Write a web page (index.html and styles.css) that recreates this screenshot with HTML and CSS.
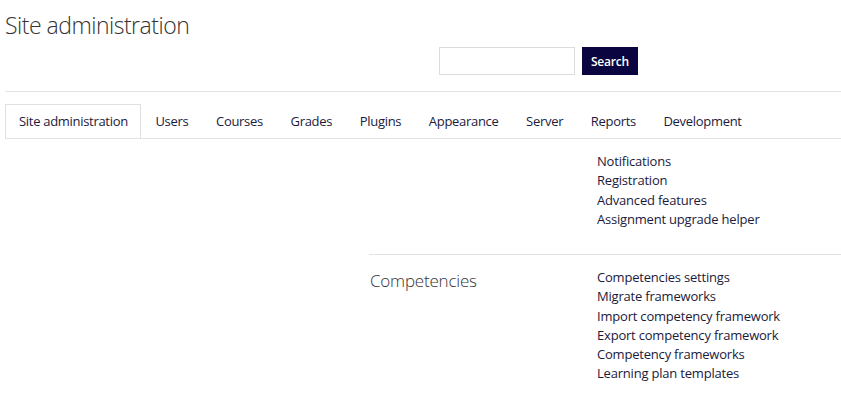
FILE: index.html
```html
<!DOCTYPE html>
<html lang="en">
<head>
<meta charset="utf-8">
<title>Site administration</title>
<link rel="stylesheet" href="styles.css">
</head>
<body>
<div class="page">
  <header class="page-header">
    <h1 class="page-title">Site administration</h1>
    <form class="search-form">
      <input class="search-input" type="text" aria-label="Search">
      <button class="search-btn" type="button">Search</button>
    </form>
  </header>
  <nav class="tabs">
    <a class="tab active">Site administration</a>
    <a class="tab">Users</a>
    <a class="tab">Courses</a>
    <a class="tab">Grades</a>
    <a class="tab">Plugins</a>
    <a class="tab">Appearance</a>
    <a class="tab">Server</a>
    <a class="tab">Reports</a>
    <a class="tab">Development</a>
  </nav>
  <div class="sections">
    <section class="section first">
      <h2 class="section-title"></h2>
      <ul class="links">
        <li>Notifications</li>
        <li>Registration</li>
        <li>Advanced features</li>
        <li>Assignment upgrade helper</li>
      </ul>
    </section>
    <section class="section">
      <h2 class="section-title">Competencies</h2>
      <ul class="links">
        <li>Competencies settings</li>
        <li>Migrate frameworks</li>
        <li>Import competency framework</li>
        <li>Export competency framework</li>
        <li>Competency frameworks</li>
        <li>Learning plan templates</li>
      </ul>
    </section>
  </div>
</div>
</body>
</html>
```

FILE: styles.css
```css
html, body {
  margin: 0;
  padding: 0;
  background: #fff;
}
body {
  font-family: "Open Sans", "Noto Sans", "Liberation Sans", sans-serif;
  color: #1b1a3c;
  font-size: 13px;
}
.page {
  padding-left: 5px;
}
.page-header {
  border-bottom: 1px solid #e3e3e3;
  padding-top: 11px;
  padding-bottom: 16px;
}
.page-title {
  margin: 0;
  font-size: 23px;
  font-weight: 300;
  letter-spacing: -0.5px;
  line-height: 29px;
  color: #333;
}
.search-form {
  display: flex;
  gap: 7px;
  margin-top: 7px;
  margin-left: 434px;
}
.search-input {
  box-sizing: border-box;
  width: 136px;
  height: 28px;
  border: 1px solid #dcdcdc;
  margin: 0;
  padding: 0 6px;
}
.search-btn {
  box-sizing: border-box;
  width: 56px;
  height: 28px;
  border: 0;
  margin: 0;
  padding: 0;
  background: #0a0540;
  color: #fff;
  font-family: inherit;
  font-size: 12px;
  font-weight: 600;
  letter-spacing: -0.2px;
}
.tabs {
  display: flex;
  margin-top: 12px;
  border-bottom: 1px solid #e3e3e3;
}
.tab {
  padding: 0 12.6px 0 13px;
  line-height: 33px;
  border: 1px solid transparent;
  border-bottom: 0;
  color: #1b1a3c;
  letter-spacing: -0.3px;
  white-space: nowrap;
}
.tab.active {
  border-color: #e0e0e0;
}
.sections {
  margin-left: 364px;
}
.section {
  display: grid;
  grid-template-columns: 228px 1fr;
  padding-top: 13px;
  padding-bottom: 25px;
  border-top: 1px solid #e3e3e3;
}
.section.first {
  border-top: 0;
}
.section-title {
  margin: 0;
  padding-left: 1px;
  font-size: 17px;
  font-weight: 300;
  letter-spacing: -0.2px;
  line-height: 25px;
  color: #333;
}
.links {
  list-style: none;
  margin: 0;
  padding: 0;
  letter-spacing: -0.2px;
  line-height: 19.25px;
}
```
